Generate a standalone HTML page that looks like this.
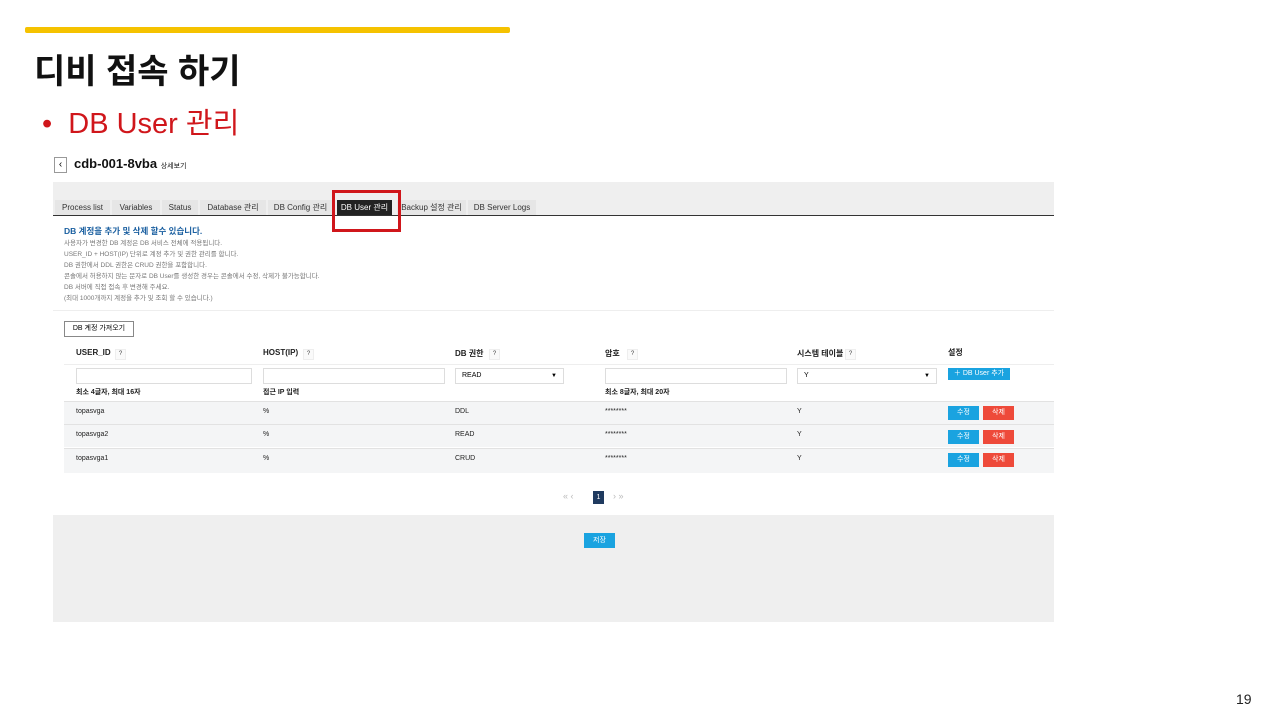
<!DOCTYPE html><html><head><meta charset="utf-8"><style>
body{margin:0;width:1280px;height:720px;position:relative;background:#fff;font-family:"Liberation Sans","Noto Sans CJK KR",sans-serif;overflow:hidden}
.a{position:absolute}
.t{font-size:8px;color:#222}
.tab{position:absolute;top:200px;height:15px;background:#e6e6e6;font-size:8px;color:#333;text-align:center;line-height:15px}
.q{position:absolute;width:9px;height:9px;border:1px solid #eee;background:#fafafa;font-size:6px;text-align:center;line-height:9px;color:#444}
.inp{position:absolute;height:14px;border:1px solid #ddd;background:#fff}
.row{position:absolute;left:64px;width:990px;height:22px;background:#f4f5f6;border-top:1px solid #e2e2e2}
.b{position:absolute;height:14px;width:31px;font-size:7px;color:#fff;text-align:center;line-height:14px}
</style></head><body>
<div class="a" style="left:25px;top:27px;width:485px;height:6px;background:#f5c200;border-radius:2px"></div>
<div class="a" style="left:34px;top:44px;font-size:34px;font-weight:bold;color:#111">디비 접속 하기</div>
<div class="a" style="left:42px;top:100px;font-size:29px;color:#d0161b">•&nbsp; DB User 관리</div>

<div class="a" style="left:54px;top:157px;width:11px;height:14px;border:1px solid #999;font-size:10px;line-height:14px;text-align:center">‹</div>
<div class="a" style="left:74px;top:156px;font-size:13px;font-weight:bold;color:#111">cdb-001-8vba <span style="font-size:7px;font-weight:normal">상세보기</span></div>
<div class="a" style="left:53px;top:182px;width:1001px;height:33px;background:#efefef"></div>
<div class="a" style="left:53px;top:215px;width:1001px;height:1px;background:#333"></div>
<div class="tab" style="left:55px;width:55px">Process list</div>
<div class="tab" style="left:112px;width:48px">Variables</div>
<div class="tab" style="left:162px;width:36px">Status</div>
<div class="tab" style="left:200px;width:66px">Database 관리</div>
<div class="tab" style="left:268px;width:65px">DB Config 관리</div>
<div class="tab" style="left:337px;width:55px;background:#222;color:#fff">DB User 관리</div>
<div class="tab" style="left:397px;width:69px">Backup 설정 관리</div>
<div class="tab" style="left:468px;width:68px">DB Server Logs</div>
<div class="a" style="left:332px;top:190px;width:63px;height:36px;border:3px solid #d0161b"></div>

<div class="a" style="left:64px;top:225px;font-size:8.5px;font-weight:bold;color:#1a5fa0">DB 계정을 추가 및 삭제 할수 있습니다.</div>
<div class="a" style="left:64px;top:238px;font-size:6.5px;color:#777;line-height:11px">사용자가 변경한 DB 계정은 DB 서비스 전체에 적용됩니다.<br>USER_ID + HOST(IP) 단위로 계정 추가 및 권한 관리를 합니다.<br>DB 권한에서 DDL 권한은 CRUD 권한을 포함합니다.<br>콘솔에서 허용하지 않는 문자로 DB User를 생성한 경우는 콘솔에서 수정, 삭제가 불가능합니다.<br>DB 서버에 직접 접속 후 변경해 주세요.<br>(최대 1000개까지 계정을 추가 및 조회 할 수 있습니다.)</div>
<div class="a" style="left:53px;top:310px;width:1001px;height:1px;background:#eee"></div>
<div class="a" style="left:64px;top:321px;width:68px;height:14px;border:1px solid #888;font-size:7px;text-align:center;line-height:14px">DB 계정 가져오기</div>

<div class="a t" style="left:76px;top:348px;font-weight:bold">USER_ID</div><div class="q" style="left:115px;top:349px">?</div>
<div class="a t" style="left:263px;top:348px;font-weight:bold">HOST(IP)</div><div class="q" style="left:303px;top:349px">?</div>
<div class="a t" style="left:455px;top:348px;font-weight:bold">DB 권한</div><div class="q" style="left:489px;top:349px">?</div>
<div class="a t" style="left:605px;top:348px;font-weight:bold">암호</div><div class="q" style="left:627px;top:349px">?</div>
<div class="a t" style="left:797px;top:348px;font-weight:bold">시스템 테이블</div><div class="q" style="left:845px;top:349px">?</div>
<div class="a t" style="left:948px;top:347px;font-weight:bold">설정</div>
<div class="a" style="left:64px;top:364px;width:990px;height:1px;background:#eee"></div>
<div class="inp" style="left:76px;top:368px;width:174px"></div>
<div class="inp" style="left:263px;top:368px;width:180px"></div>
<div class="inp" style="left:455px;top:368px;width:107px;font-size:7px;line-height:14px;text-indent:6px">READ<span style="position:absolute;right:6px;font-size:6px">▼</span></div>
<div class="inp" style="left:605px;top:368px;width:180px"></div>
<div class="inp" style="left:797px;top:368px;width:138px;font-size:7px;line-height:14px;text-indent:6px">Y<span style="position:absolute;right:6px;font-size:6px">▼</span></div>
<div class="b" style="left:948px;top:368px;width:62px;height:12px;line-height:12px;background:#1aa3e0">＋ DB User 추가</div>
<div class="a t" style="left:76px;top:387px;font-size:7px;font-weight:bold">최소 4글자, 최대 16자</div>
<div class="a t" style="left:263px;top:387px;font-size:7px;font-weight:bold">접근 IP 입력</div>
<div class="a t" style="left:605px;top:387px;font-size:7px;font-weight:bold">최소 8글자, 최대 20자</div>

<div class="row" style="top:401px"></div><div class="row" style="top:424px"></div><div class="row" style="top:448px;height:24px"></div>
<div class="a t" style="left:76px;top:400px;font-size:7px;line-height:23.3px">topasvga<br>topasvga2<br>topasvga1</div>
<div class="a t" style="left:263px;top:400px;font-size:7px;line-height:23.3px">%<br>%<br>%</div>
<div class="a t" style="left:455px;top:400px;font-size:7px;line-height:23.3px">DDL<br>READ<br>CRUD</div>
<div class="a t" style="left:605px;top:400px;font-size:7px;line-height:23.3px">********<br>********<br>********</div>
<div class="a t" style="left:797px;top:400px;font-size:7px;line-height:23.3px">Y<br>Y<br>Y</div>
<div class="b" style="left:948px;top:406px;background:#1aa3e0">수정</div><div class="b" style="left:983px;top:406px;background:#ee4a3a">삭제</div>
<div class="b" style="left:948px;top:430px;background:#1aa3e0">수정</div><div class="b" style="left:983px;top:430px;background:#ee4a3a">삭제</div>
<div class="b" style="left:948px;top:453px;background:#1aa3e0">수정</div><div class="b" style="left:983px;top:453px;background:#ee4a3a">삭제</div>

<div class="a" style="left:563px;top:491px;font-size:9px;color:#bbb">« ‹</div>
<div class="a" style="left:593px;top:491px;width:11px;height:13px;background:#1f3a5f;color:#fff;font-size:7px;text-align:center;line-height:13px">1</div>
<div class="a" style="left:613px;top:491px;font-size:9px;color:#bbb">› »</div>

<div class="a" style="left:53px;top:515px;width:1001px;height:107px;background:#efefef"></div>
<div class="b" style="left:584px;top:533px;width:31px;height:15px;line-height:15px;background:#1aa3e0">저장</div>
<div class="a" style="left:1236px;top:691px;font-size:14px;color:#222">19</div>
</body></html>
